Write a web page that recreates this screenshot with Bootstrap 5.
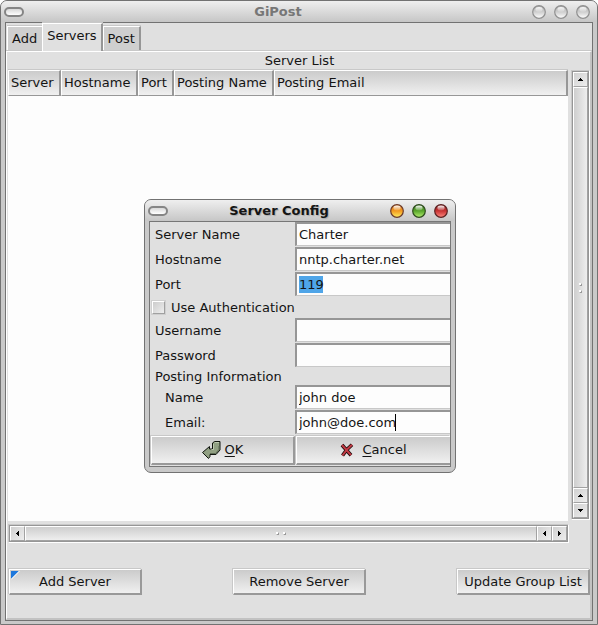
<!DOCTYPE html>
<html lang="en">
<head>
<meta charset="utf-8">
<meta name="viewport" content="width=device-width, initial-scale=1">
<title>GiPost</title>
<link href="https://cdn.jsdelivr.net/npm/bootstrap@5.3.0/dist/css/bootstrap.min.css" rel="stylesheet">
<style>
body{font:13px/16px "DejaVu Sans",sans-serif;color:#141414;background:#fff}
button,input{font:inherit;color:inherit}
.win{background:#c9c9c9;border:1px solid #727272;border-radius:7px 7px 0 0;padding:0 4px 3px}
.titlebar{height:21px;margin:0 -4px;padding:0 7px 0 3px;border-radius:6px 6px 0 0;background:linear-gradient(#efefef,#c6c6c6);font-weight:700}
.titlebar h1,.titlebar h2{font:inherit;font-weight:700;margin:0;text-shadow:1px 1px 1px #aaa}
.titlebar.inactive h1{color:#777;text-shadow:none}
.pill{width:20px;height:10px;border:2px solid #858585;border-radius:6px;background:linear-gradient(#d8d8d8,#fff);padding:0}
.orb{width:14px;height:14px;border:0;padding:0;background:none;display:block}
.orb svg{display:block}
.titlebar .orbs{gap:8px}
.client{background:#e0e0e0;border:1px solid #727272}
.tabs{height:28px;padding:1px 0 0 1px}
.tab{border:1px solid #fff;border-bottom:0;border-right:2px solid #969696;background:#cfcfcf;padding:3px 4px 4px;height:25px;line-height:18px;box-shadow:0 -1px #c8c8c8}
.tab.first{border-right:0;padding-right:5px}
.tab.current{background:#e0e0e0;height:28px;padding:3px 4px 6px;position:relative}
.pane{border:solid;border-width:1px 2px 2px 1px;border-color:#fff #c2c2c2 #c2c2c2 #fff;padding:0 0 23px 1px;box-shadow:0 -1px #c8c8c8}
.caption-line{height:18px;line-height:18px;padding-left:1px}
.listing{background:#fdfdfd}
.listing table{width:100%;table-layout:fixed;border-collapse:separate;border-spacing:0}
.listing th{height:26px;padding:0 0 0 2px;font-weight:400;white-space:nowrap;border:solid;border-width:1px 2px 1px 1px;border-color:#fff #979797 #979797 #fff;background:linear-gradient(#cbcbcb,#f0f0f0);box-shadow:0 -1px #c8c8c8}
.c1{width:53px}.c2{width:77px}.c3{width:36px}.c4{width:100px}
.trough{border:1px solid;border-color:#c8c8c8 #fff #fff #c8c8c8;padding:1px;background:#969696}
.vbar{flex:0 0 19px;margin:0 0 1px 3px}
.hbar{height:19px;margin:3px 21px 0 0}
.piece{border:1px solid;border-color:#fff #a2a2a2 #a2a2a2 #fff;background:linear-gradient(135deg,#d0d0d0,#eee);padding:0;display:flex;align-items:center;justify-content:center;gap:4px}
.vbar .piece{height:15px}.hbar .piece{width:15px}
.vbar .thumb{height:auto;flex-direction:column;background:linear-gradient(90deg,#cecece,#eee)}
.hbar .thumb{width:auto;background:linear-gradient(#cecece,#eee)}
.grip{width:3px;height:3px;border:1px solid;border-color:#fff #999 #999 #fff;background:#fff}
.push{border:solid;border-width:1px 2px 2px 1px;border-color:#fff #999 #999 #fff;border-radius:0;background:linear-gradient(#cbcbcb,#f0f0f0);box-shadow:-1px -1px #c8c8c8;padding:0}
.actions{margin:26px 0 0 1px}
.actions .push{width:133px;height:26px;position:relative}
.corner{position:absolute;left:1px;top:1px}
.dialog-win{position:absolute;left:144px;top:199px;width:312px;border-radius:7px;padding-bottom:5px}
.dialog-win .client{padding:0 0 1px;border-color:#777}
.field{display:grid;grid-template-columns:145px 1fr;height:25px}
.field label{padding:4px 0 0 5px;line-height:18px}
.field label.sub{padding-left:15px}
.field input{min-width:0;width:100%;height:24px;border:solid;border-width:2px 0 1px 2px;border-color:#969696 #fff #c8c8c8 #969696;border-radius:0;background:#fdfdfd;padding:0 0 0 2px;outline:0}
.field input.picked{background:linear-gradient(#4fa5e8,#4fa5e8) 2px 2px/24px 17px no-repeat #fdfdfd}
.field input.caret{background:linear-gradient(#000,#000) 98px 2px/1px 17px no-repeat #fdfdfd}
.tick{height:21px;padding-left:2px;gap:6px}
.tick input{appearance:none;width:13px;height:13px;margin:0;border:1px solid;border-color:#fff #a0a0a0 #a0a0a0 #fff;background:linear-gradient(135deg,#ccc,#eee);box-shadow:0 0 0 1px #cfcfcf}
.group{height:17px;line-height:18px;padding-left:5px}
.choices{gap:1px;padding-left:1px;padding-top:1px}
.choices .push{height:29px;flex:1 1 0}
.choices .last{flex:0 0 154px;border-right:0}
.key{text-decoration:underline;text-underline-offset:2px}
</style>
<script src="https://cdn.jsdelivr.net/npm/bootstrap@5.3.0/dist/js/bootstrap.bundle.min.js"></script>
</head>
<body>
<svg width="0" height="0" class="position-absolute" aria-hidden="true">
<defs>
<linearGradient id="shine" x2="0" y2="1"><stop stop-color="#fff" stop-opacity=".95"/><stop offset="1" stop-color="#fff" stop-opacity=".15"/></linearGradient>
<linearGradient id="silver" x2="0" y2="1"><stop stop-color="#a8a8a8"/><stop offset=".5" stop-color="#cfcfcf"/><stop offset="1" stop-color="#fff"/></linearGradient>
<linearGradient id="amber" x2="0" y2="1"><stop stop-color="#d8761c"/><stop offset=".5" stop-color="#f39a20"/><stop offset="1" stop-color="#fff060"/></linearGradient>
<linearGradient id="green" x2="0" y2="1"><stop stop-color="#3c7820"/><stop offset=".5" stop-color="#5aa62c"/><stop offset="1" stop-color="#b4f070"/></linearGradient>
<linearGradient id="red" x2="0" y2="1"><stop stop-color="#8e2020"/><stop offset=".5" stop-color="#c93434"/><stop offset="1" stop-color="#ff8a80"/></linearGradient>
</defs>
</svg>
<main class="win d-flex flex-column min-vh-100">
  <header class="titlebar inactive d-flex align-items-center">
    <button class="pill" aria-label="Window menu"></button>
    <h1 class="flex-grow-1 text-center">GiPost</h1>
    <div class="orbs d-flex">
      <button class="orb" aria-label="Minimize"><svg width="14" height="14"><circle cx="7" cy="7" r="6.3" fill="url(#silver)" stroke="#909090" stroke-width="1.2"/><ellipse cx="7" cy="4.4" rx="3.6" ry="2.4" fill="url(#shine)"/></svg></button>
      <button class="orb" aria-label="Maximize"><svg width="14" height="14"><circle cx="7" cy="7" r="6.3" fill="url(#silver)" stroke="#909090" stroke-width="1.2"/><ellipse cx="7" cy="4.4" rx="3.6" ry="2.4" fill="url(#shine)"/></svg></button>
      <button class="orb" aria-label="Close"><svg width="14" height="14"><circle cx="7" cy="7" r="6.3" fill="url(#silver)" stroke="#909090" stroke-width="1.2"/><ellipse cx="7" cy="4.4" rx="3.6" ry="2.4" fill="url(#shine)"/></svg></button>
    </div>
  </header>
  <div class="client d-flex flex-column flex-grow-1">
    <div class="tabs d-flex align-items-end" role="tablist">
      <button class="tab first" role="tab">Add</button>
      <button class="tab current" role="tab" aria-selected="true">Servers</button>
      <button class="tab" role="tab">Post</button>
    </div>
    <section class="pane d-flex flex-column flex-grow-1">
      <div class="caption-line text-center">Server List</div>
      <div class="d-flex flex-grow-1">
        <div class="listing flex-grow-1">
          <table>
            <colgroup><col class="c1"><col class="c2"><col class="c3"><col class="c4"><col></colgroup>
            <thead><tr><th>Server</th><th>Hostname</th><th>Port</th><th>Posting Name</th><th>Posting Email</th></tr></thead>
          </table>
        </div>
        <div class="trough vbar d-flex flex-column">
          <button class="piece" aria-label="Scroll up"><svg width="5" height="3"><path d="M2 0h1v1h1v1h1v1H0V2h1V1h1z"/></svg></button>
          <div class="piece thumb flex-grow-1"><span class="grip"></span><span class="grip"></span></div>
          <button class="piece" aria-label="Scroll up"><svg width="5" height="3"><path d="M2 0h1v1h1v1h1v1H0V2h1V1h1z"/></svg></button>
          <button class="piece" aria-label="Scroll down"><svg width="5" height="3"><path d="M0 0h5v1H4v1H3v1H2V2H1V1H0z"/></svg></button>
        </div>
      </div>
      <div class="trough hbar d-flex">
        <button class="piece" aria-label="Scroll left"><svg width="3" height="5"><path d="M3 0v5H2V4H1V3H0V2h1V1h1V0z"/></svg></button>
        <div class="piece thumb flex-grow-1"><span class="grip"></span><span class="grip"></span></div>
        <button class="piece" aria-label="Scroll left"><svg width="3" height="5"><path d="M3 0v5H2V4H1V3H0V2h1V1h1V0z"/></svg></button>
        <button class="piece" aria-label="Scroll right"><svg width="3" height="5"><path d="M0 0v5h1V4h1V3h1V2H2V1H1V0z"/></svg></button>
      </div>
      <div class="actions d-flex justify-content-between">
        <button class="push"><svg class="corner" width="9" height="9"><path d="M0 0h8L0 8z" fill="#1e78dc"/><path d="M8.500 0L0 8.500" stroke="#fff"/></svg>Add Server</button>
        <button class="push">Remove Server</button>
        <button class="push">Update Group List</button>
      </div>
    </section>
  </div>
</main>

<form class="win dialog-win" role="dialog" aria-labelledby="dlg-title">
  <header class="titlebar d-flex align-items-center">
    <button type="button" class="pill" aria-label="Window menu"></button>
    <h2 id="dlg-title" class="flex-grow-1 text-center">Server Config</h2>
    <div class="orbs d-flex">
      <button type="button" class="orb" aria-label="Minimize"><svg width="14" height="14"><circle cx="7" cy="7" r="6.3" fill="url(#amber)" stroke="#6b3a2a" stroke-width="1.2"/><ellipse cx="7" cy="4" rx="3.6" ry="2.4" fill="url(#shine)"/></svg></button>
      <button type="button" class="orb" aria-label="Maximize"><svg width="14" height="14"><circle cx="7" cy="7" r="6.3" fill="url(#green)" stroke="#2e4a1e" stroke-width="1.2"/><ellipse cx="7" cy="4" rx="3.6" ry="2.4" fill="url(#shine)"/></svg></button>
      <button type="button" class="orb" aria-label="Close"><svg width="14" height="14"><circle cx="7" cy="7" r="6.3" fill="url(#red)" stroke="#5a2222" stroke-width="1.2"/><ellipse cx="7" cy="4" rx="3.6" ry="2.4" fill="url(#shine)"/></svg></button>
    </div>
  </header>
  <div class="client">
    <div class="field"><label for="f-server">Server Name</label><input id="f-server" type="text" value="Charter"></div>
    <div class="field"><label for="f-host">Hostname</label><input id="f-host" type="text" value="nntp.charter.net"></div>
    <div class="field"><label for="f-port">Port</label><input id="f-port" class="picked" type="text" value="119"></div>
    <div class="tick d-flex align-items-center"><input id="f-auth" type="checkbox"><label for="f-auth">Use Authentication</label></div>
    <div class="field"><label for="f-user">Username</label><input id="f-user" type="text"></div>
    <div class="field"><label for="f-pass">Password</label><input id="f-pass" type="password"></div>
    <div class="group">Posting Information</div>
    <div class="field"><label class="sub" for="f-name">Name</label><input id="f-name" type="text" value="john doe"></div>
    <div class="field"><label class="sub" for="f-mail">Email:</label><input id="f-mail" class="caret" type="text" value="john@doe.com"></div>
    <div class="choices d-flex">
      <button type="button" class="push d-flex align-items-center justify-content-center gap-1"><svg width="19" height="18"><path d="M10.500 2L12.500 .500h5.500v8.500L14 13.500H8v2L6.500 17.500 .500 11.500 7.500 5.500v2.500h3z" fill="#91a083" stroke="#10140e"/><path d="M11.500 3v5.500h-2M13 1.500h4" stroke="#bcc8b0" fill="none"/><path d="M17 5v3.500L13.500 12.500H8" stroke="#5d6a54" fill="none"/></svg><span><span class="key">O</span>K</span></button>
      <button type="button" class="push last d-flex align-items-center justify-content-center gap-1"><svg class="me-1" width="14" height="14"><path d="M2 2L11 12.200M12 1.800L7 6.500 2.500 12.500" stroke="#1c0808" stroke-width="3.600" fill="none"/><path d="M2 2L11 12.200M12 1.800L7 6.500 2.500 12.500" stroke="#c03a44" stroke-width="2" fill="none"/></svg><span><span class="key">C</span>ancel</span></button>
    </div>
  </div>
</form>
</body>
</html>
